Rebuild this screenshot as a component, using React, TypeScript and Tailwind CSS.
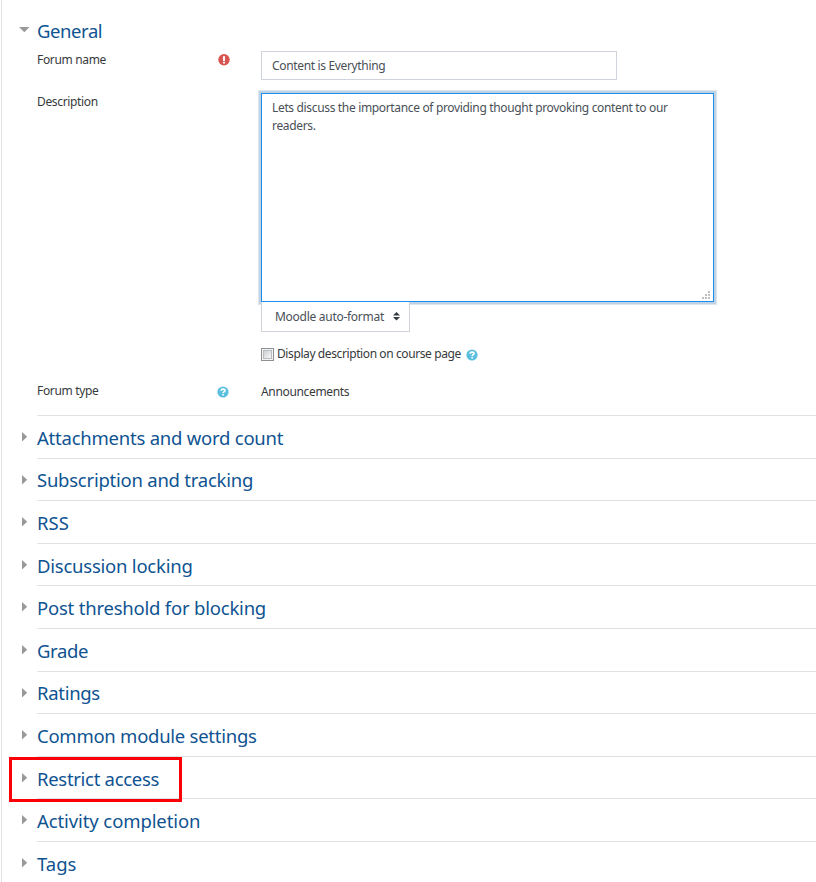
const sections = [
  { title: 'Attachments and word count', tracking: 'tracking-[-0.23px]' },
  { title: 'Subscription and tracking', tracking: 'tracking-[-0.24px]' },
  { title: 'RSS', tracking: 'tracking-[0px]' },
  { title: 'Discussion locking', tracking: 'tracking-[-0.23px]' },
  { title: 'Post threshold for blocking', tracking: 'tracking-[-0.21px]' },
  { title: 'Grade', tracking: 'tracking-[-0.35px]' },
  { title: 'Ratings', tracking: 'tracking-[-0.3px]' },
  { title: 'Common module settings', tracking: 'tracking-[-0.26px]' },
  { title: 'Restrict access', tracking: 'tracking-[-0.3px]', marked: true },
  { title: 'Activity completion', tracking: 'tracking-[-0.1px]' },
  { title: 'Tags', tracking: 'tracking-[0px]' },
];

function HelpIcon() {
  return (
    <svg width="12" height="12" viewBox="0 0 12 12" className="block shrink-0" aria-label="Help">
      <circle cx="6" cy="6" r="5.6" fill="#5bc0de" />
      <path d="M4 4.8C4.1 3.6 4.9 3.1 6 3.1s2 .5 2 1.5C8 5.8 6.2 5.6 6.2 7.1" fill="none" stroke="#fff" strokeWidth="1.6" />
      <rect x="5.3" y="7.9" width="1.7" height="1.5" fill="#fff" />
    </svg>
  );
}

function RequiredIcon() {
  return (
    <svg width="12" height="12" viewBox="0 0 12 12" className="block shrink-0" aria-label="Required">
      <circle cx="6" cy="5.8" r="5.7" fill="#d9534f" />
      <path d="M4.9 2.2h2.2L6.9 6.9H5.1Z" fill="#fff" />
      <rect x="5" y="7.8" width="2" height="1.7" fill="#fff" />
    </svg>
  );
}

export default function App() {
  return (
    <div className="flex h-[882px] w-[816px] overflow-hidden bg-white pl-px font-['Noto_Sans','Open_Sans',sans-serif] text-[12px] leading-[18px] tracking-[-0.34px] text-[#373a3c]">
      <main className="flex min-w-0 flex-1 flex-col border-l border-[#dfe1e4]">
        <header className="flex h-[46px] shrink-0 pt-[17px] pl-[17px]">
          <svg width="11" height="6" viewBox="0 0 11 6" className="mt-[10px] block">
            <path d="M0 0h10.5L5.3 5.3Z" fill="#999" />
          </svg>
          <h2 className="ml-[7px] text-[18.5px] leading-[28px] tracking-[-0.43px] text-[#0f5391]">General</h2>
        </header>

        <div className="flex shrink-0 pt-[5px] pl-[35px]">
          <div className="flex w-[224px] items-start">
            <span className="w-[181px]">Forum name</span>
            <span className="mt-[3px]"><RequiredIcon /></span>
          </div>
          <div className="h-[29px] w-[356px] border border-[#ced4da] pt-[5px] pl-[10px] text-[#495057]">Content is Everything</div>
        </div>

        <div className="flex shrink-0 pt-[13px] pl-[35px]">
          <div className="w-[224px]">Description</div>
          <div className="flex flex-col items-start">
            <div className="relative flex h-[209px] w-[453px] flex-col justify-between border border-[#1f8cf0] bg-white pt-[5px] pl-[10px] text-[#495057] shadow-[0_0_0_2px_#bfd3e4,0_0_0_3px_#dbe6ef]">
              <p>Lets discuss the importance of providing thought provoking content to our<br />readers.</p>
              <svg width="9" height="9" viewBox="0 0 9 9" className="mr-[2px] mb-[1px] self-end" fill="#c0c0c0">
                <rect x="6" y="0" width="2" height="2" />
                <rect x="3" y="3" width="2" height="2" />
                <rect x="6" y="3" width="2" height="2" />
                <rect x="0" y="6" width="2" height="2" />
                <rect x="3" y="6" width="2" height="2" />
                <rect x="6" y="6" width="2" height="2" />
              </svg>
            </div>
            <div className="relative flex h-[30px] w-[149px] border border-t-0 border-[#ced4da] bg-white pt-[6px] pl-[13px] text-[#495057]">
              <span className="w-[118px] tracking-[-0.28px]">Moodle auto-format</span>
              <svg width="7" height="9" viewBox="0 0 7 9" className="mt-[4px] block" fill="#343a40">
                <path d="M3.5 0L7 3.5H0Z" />
                <path d="M0 5h7L3.5 8.5Z" />
              </svg>
            </div>
            <div className="flex h-[31px] items-start pt-[13px]">
              <span className="mt-[3px] flex h-[13px] w-[13px] items-center justify-center border border-[#8e8f8f] bg-[#f4f4f4]">
                <span className="h-[9px] w-[9px] border border-[#b9bcc0] bg-linear-to-br from-[#cfd1d4] to-[#f6f6f6]" />
              </span>
              <span className="ml-[3px] w-[189px] tracking-[-0.4px] whitespace-nowrap">Display description on course page</span>
              <span className="mt-[4px]"><HelpIcon /></span>
            </div>
          </div>
        </div>

        <div className="flex h-[52px] shrink-0 pt-[19px] pl-[35px]">
          <span className="w-[180px]">Forum type</span>
          <span className="mt-[4px] w-[44px]"><HelpIcon /></span>
          <span className="mt-px">Announcements</span>
        </div>

        {sections.map(({ title, tracking, marked }) => (
          <section key={title} className="relative ml-[20px] flex h-[42.6px] shrink-0">
            <svg width="6" height="10" viewBox="0 0 6 10" className="mt-[17px] block shrink-0">
              <path d="M0 0L5.2 4.8L0 9.6Z" fill="#999" />
            </svg>
            <div className="ml-[9px] flex-1 border-t border-[#dfe2e5] pt-[7.85px]">
              <h2 className={'text-[18.5px] leading-[28px] text-[#0f5391] ' + tracking}>{title}</h2>
            </div>
            {marked && <div className="absolute top-px -left-[13px] z-10 h-[45px] w-[173px] border-[3px] border-[#fb0006]" />}
          </section>
        ))}
      </main>
    </div>
  );
}
